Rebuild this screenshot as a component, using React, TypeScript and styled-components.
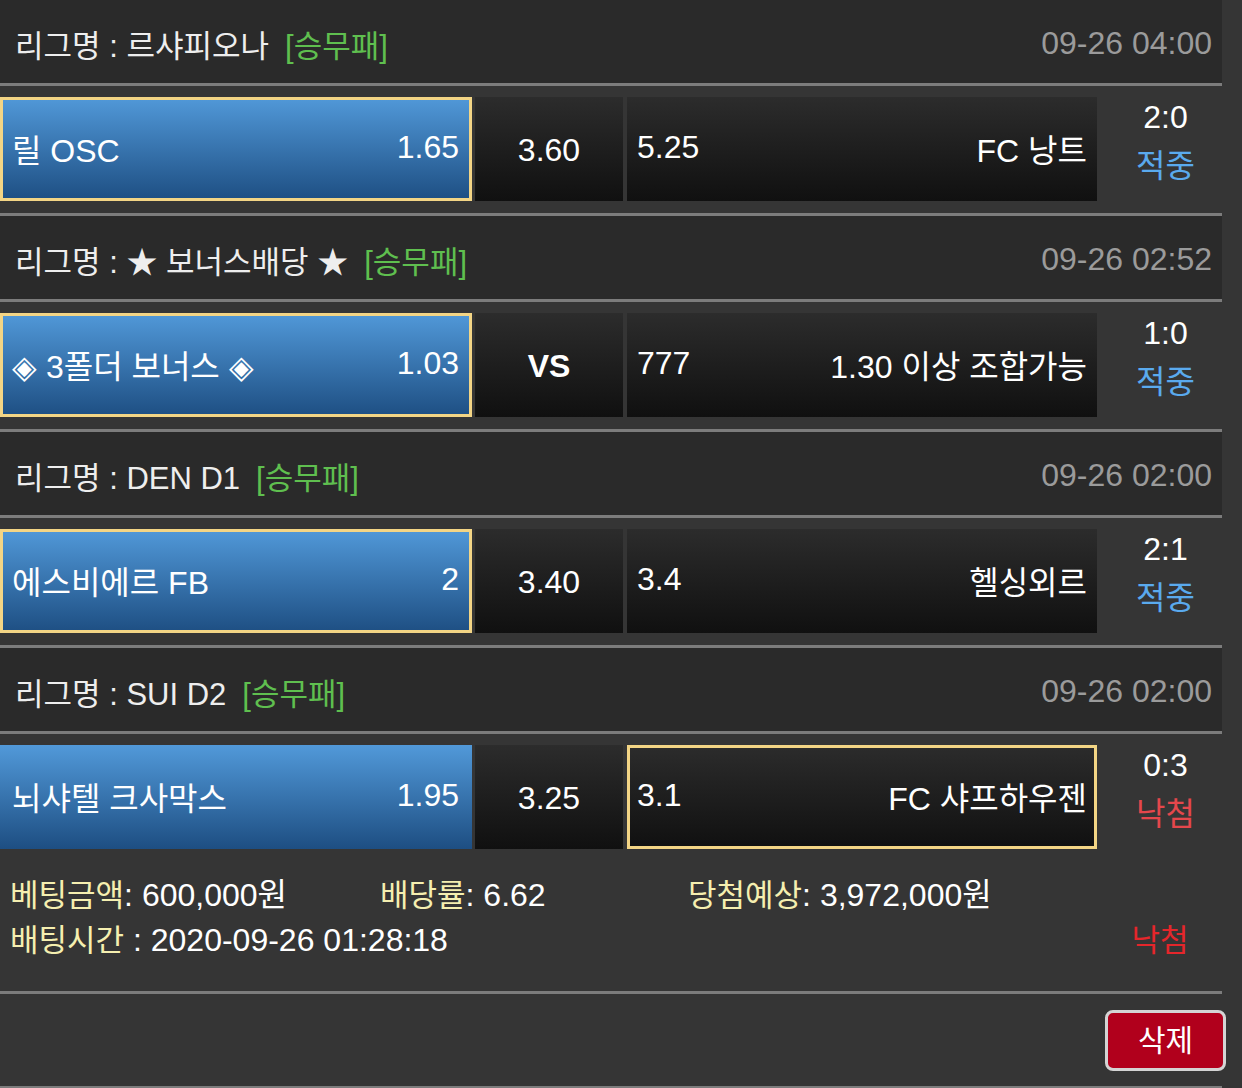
import React from 'react';
import styled, { createGlobalStyle } from 'styled-components';

const FONT = `'Liberation Sans', 'Noto Sans CJK KR', sans-serif`;

const GlobalStyle = createGlobalStyle`
  body {
    margin: 0;
    background: #353535;
    font-family: ${FONT};
    color: #f2f2f2;
  }
`;

const Page = styled.div`
  width: 1242px;
  height: 1088px;
  overflow: hidden;
  background: #353535;
`;

const List = styled.div`
  width: 1222px;
`;

const LeagueHeader = styled.div`
  height: 86px;
  display: flex;
  align-items: center;
  justify-content: space-between;
  padding: 3px 10px 0 15px;
  box-sizing: border-box;
  background: #2a2a2a;
  border-bottom: 3px solid #7c7c7c;
  font-size: 31px;
  color: #eeeeee;
`;

const LeagueName = styled.div`
  display: flex;
  align-items: center;
`;

const GameType = styled.span`
  margin-left: 16px;
  color: #5fbf4f;
`;

const GameTime = styled.span`
  color: #9b9b9b;
  font-size: 32px;
`;

interface RowProps {
  last?: boolean;
}

const GameRow = styled.div<RowProps>`
  display: grid;
  grid-template-columns: 472px 148px 471px 1fr;
  column-gap: 3px;
  padding: 11px 0 ${(p) => (p.last ? '0' : '12px')};
  border-bottom: ${(p) => (p.last ? 'none' : '3px solid #7c7c7c')};
`;

interface CellProps {
  selected?: boolean;
}

const HomeCell = styled.div<CellProps>`
  height: 104px;
  display: flex;
  align-items: center;
  justify-content: space-between;
  padding: 0 13px 3px 12px;
  box-sizing: border-box;
  background: linear-gradient(#5199d9, #1d4e82);
  box-shadow: ${(p) => (p.selected ? 'inset 0 0 0 3px #f3d585' : 'none')};
  font-size: 32px;
  color: #ffffff;
`;

const DrawCell = styled.div`
  height: 104px;
  display: flex;
  align-items: center;
  justify-content: center;
  padding-top: 2px;
  box-sizing: border-box;
  background: linear-gradient(#2c2c2c, #101010);
  font-size: 32px;
  color: #ffffff;
`;

const VsText = styled.span`
  font-weight: 700;
`;

const AwayCell = styled.div<CellProps>`
  height: 104px;
  margin-left: 1px;
  display: flex;
  align-items: center;
  justify-content: space-between;
  padding: 0 10px 3px 10px;
  box-sizing: border-box;
  background: linear-gradient(#2c2c2c, #101010);
  box-shadow: ${(p) => (p.selected ? 'inset 0 0 0 3px #f3d585' : 'none')};
  font-size: 32px;
  color: #ffffff;
`;

const ResultCell = styled.div`
  height: 104px;
  margin-left: -3px;
  display: flex;
  flex-direction: column;
  align-items: center;
  justify-content: center;
  padding: 0 0 14px 12px;
  box-sizing: border-box;
  font-size: 32px;
  line-height: 49px;
`;

const Score = styled.span`
  color: #ffffff;
`;

interface OutcomeProps {
  win: boolean;
}

const Outcome = styled.span<OutcomeProps>`
  color: ${(p) => (p.win ? '#5aaaee' : '#e4474c')};
`;

const Summary = styled.div`
  height: 145px;
  padding: 24px 0 0 10px;
  box-sizing: border-box;
  border-bottom: 3px solid #7c7c7c;
  font-size: 31px;
  line-height: 45px;
`;

const SummaryLine = styled.div`
  display: grid;
  grid-template-columns: 370px 308px 1fr 124px;
`;

const Label = styled.span`
  color: #f5efb0;
`;

const Value = styled.span`
  color: #ffffff;
  font-size: 32px;
`;

const LossMark = styled.span`
  grid-column: 4;
  text-align: center;
  color: #e5262b;
`;

const ActionBar = styled.div`
  height: 94px;
  width: 1222px;
  display: flex;
  justify-content: flex-end;
  align-items: flex-start;
  padding: 16px 16px 0 0;
  box-sizing: border-box;
  border-bottom: 2px solid #7c7c7c;
`;

const DeleteButton = styled.button`
  width: 121px;
  height: 61px;
  margin-right: -20px;
  border: 3px solid #d4d4d4;
  border-radius: 8px;
  background: #b1001c;
  color: #ffffff;
  font-family: ${FONT};
  font-size: 30px;
  padding: 0 0 5px;
  cursor: pointer;
`;

interface Game {
  league: string;
  time: string;
  home: string;
  homeOdds: string;
  draw: string;
  away: string;
  awayOdds: string;
  pick: 'home' | 'away';
  score: string;
  win: boolean;
}

const games: Game[] = [
  {
    league: '르샤피오나',
    time: '09-26 04:00',
    home: '릴 OSC',
    homeOdds: '1.65',
    draw: '3.60',
    away: 'FC 낭트',
    awayOdds: '5.25',
    pick: 'home',
    score: '2:0',
    win: true,
  },
  {
    league: '★ 보너스배당 ★',
    time: '09-26 02:52',
    home: '◈ 3폴더 보너스 ◈',
    homeOdds: '1.03',
    draw: 'VS',
    away: '1.30 이상 조합가능',
    awayOdds: '777',
    pick: 'home',
    score: '1:0',
    win: true,
  },
  {
    league: 'DEN D1',
    time: '09-26 02:00',
    home: '에스비에르 FB',
    homeOdds: '2',
    draw: '3.40',
    away: '헬싱외르',
    awayOdds: '3.4',
    pick: 'home',
    score: '2:1',
    win: true,
  },
  {
    league: 'SUI D2',
    time: '09-26 02:00',
    home: '뇌샤텔 크사막스',
    homeOdds: '1.95',
    draw: '3.25',
    away: 'FC 샤프하우젠',
    awayOdds: '3.1',
    pick: 'away',
    score: '0:3',
    win: false,
  },
];

const App = () => (
  <Page>
    <GlobalStyle />
    <List>
      {games.map((g, i) => (
        <div key={i}>
          <LeagueHeader>
            <LeagueName>
              리그명 : {g.league}
              <GameType>[승무패]</GameType>
            </LeagueName>
            <GameTime>{g.time}</GameTime>
          </LeagueHeader>
          <GameRow last={i === games.length - 1}>
            <HomeCell selected={g.pick === 'home'}>
              <span>{g.home}</span>
              <span>{g.homeOdds}</span>
            </HomeCell>
            <DrawCell>{g.draw === 'VS' ? <VsText>VS</VsText> : g.draw}</DrawCell>
            <AwayCell selected={g.pick === 'away'}>
              <span>{g.awayOdds}</span>
              <span>{g.away}</span>
            </AwayCell>
            <ResultCell>
              <Score>{g.score}</Score>
              <Outcome win={g.win}>{g.win ? '적중' : '낙첨'}</Outcome>
            </ResultCell>
          </GameRow>
        </div>
      ))}
      <Summary>
        <SummaryLine>
          <span>
            <Label>베팅금액</Label>
            <Value>: 600,000원</Value>
          </span>
          <span>
            <Label>배당률</Label>
            <Value>: 6.62</Value>
          </span>
          <span>
            <Label>당첨예상</Label>
            <Value>: 3,972,000원</Value>
          </span>
        </SummaryLine>
        <SummaryLine>
          <span style={{ gridColumn: '1 / 4' }}>
            <Label>배팅시간</Label>
            <Value> : 2020-09-26 01:28:18</Value>
          </span>
          <LossMark>낙첨</LossMark>
        </SummaryLine>
      </Summary>
    </List>
    <ActionBar>
      <DeleteButton>삭제</DeleteButton>
    </ActionBar>
  </Page>
);

export default App;
